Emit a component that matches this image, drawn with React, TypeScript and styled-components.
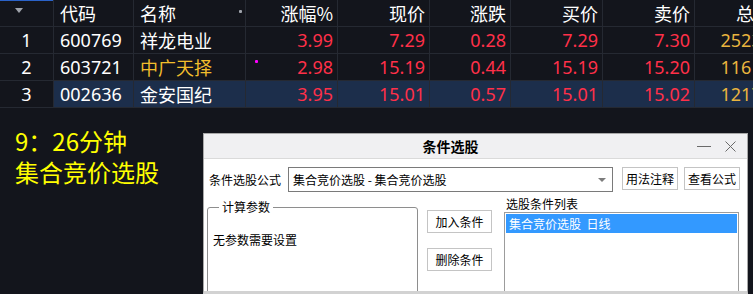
import React from "react";
import styled, { createGlobalStyle } from "styled-components";

const GlobalStyle = createGlobalStyle`
  html, body {
    margin: 0;
    padding: 0;
    background: #13151c;
  }
  * {
    box-sizing: border-box;
  }
`;

const Page = styled.div`
  width: 753px;
  height: 294px;
  overflow: hidden;
  background: #13151c;
  font-family: "Noto Sans CJK SC", sans-serif;
`;

const Grid = styled.div`
  display: grid;
  grid-template-columns: 54px 80px 112px 92px 92px 81px 92px 92px 82px;
  grid-auto-rows: 27px;
  width: 777px;
`;

const Cell = styled.div<{ $align?: "left" | "right" | "center"; $sel?: boolean; $color?: string }>`
  display: flex;
  align-items: center;
  justify-content: ${(p) =>
    p.$align === "right" ? "flex-end" : p.$align === "center" ? "center" : "flex-start"};
  padding: 0 ${(p) => (p.$align === "right" ? "4px" : "0")} 0
    ${(p) => (p.$align === "left" ? "6px" : "0")};
  border-right: 1px solid #252932;
  border-bottom: 1px solid #252932;
  background: ${(p) => (p.$sel ? "#1c2e4b" : "transparent")};
  color: ${(p) => p.$color || "#ffffff"};
  font-family: "Noto Sans", "Noto Sans CJK SC", sans-serif;
  font-size: 18px;
  line-height: 26px;
  white-space: nowrap;
  position: relative;
`;

const HeadCell = styled(Cell)`
  font-family: "Noto Sans CJK SC", sans-serif;
`;

const SortCell = styled(HeadCell)`
  box-shadow: inset 0 1px 0 #2a62c8;
  align-items: flex-start;
  padding-left: 15px;
  padding-top: 8px;
`;

const SortArrow = styled.span`
  width: 0;
  height: 0;
  border-left: 4px solid transparent;
  border-right: 4px solid transparent;
  border-top: 5px solid #9ea2aa;
`;

const Dot = styled.span<{ $color: string; $x: number; $y: number }>`
  position: absolute;
  left: ${(p) => p.$x}px;
  top: ${(p) => p.$y}px;
  width: 3px;
  height: 3px;
  border-radius: 1px;
  background: ${(p) => p.$color};
`;

const Name = styled.span`
  font-family: "Noto Sans CJK SC", sans-serif;
`;

const Lower = styled.div`
  display: flex;
  align-items: flex-start;
`;

const Caption = styled.div`
  flex: 0 0 203px;
  padding: 17px 0 0 15px;
  color: #ffff00;
  font-family: "Noto Sans CJK SC", sans-serif;
  font-size: 24px;
  line-height: 31px;
`;

const CaptionLine = styled.div`
  height: 31px;
  white-space: nowrap;
`;

const Dialog = styled.div`
  margin-top: 25px;
  width: 545px;
  height: 161px;
  background: #ffffff;
  border: 1px solid #a8a8a8;
  border-bottom: 3px solid #d2d2d2;
  overflow: hidden;
  font-family: "Noto Sans CJK SC", sans-serif;
  font-size: 12px;
  color: #000;
`;

const TitleBar = styled.div`
  display: flex;
  align-items: center;
  height: 25px;
  background: #f0f0f2;
  border-bottom: 1px solid #dadada;
`;

const Title = styled.div`
  flex: 1;
  text-align: center;
  font-size: 14px;
  font-weight: bold;
`;

const Controls = styled.div`
  flex: 0 0 50px;
  display: flex;
  align-items: center;
  gap: 14px;
`;

const MinLine = styled.span`
  width: 14px;
  height: 1px;
  background: #6a6a6a;
`;

const Row = styled.div<{ $pl: number; $mt: number }>`
  display: flex;
  align-items: flex-start;
  padding-left: ${(p) => p.$pl}px;
  margin-top: ${(p) => p.$mt}px;
`;

const Label = styled.span`
  line-height: 25px;
  white-space: pre;
`;

const Combo = styled.div`
  margin-left: 7px;
  width: 325px;
  height: 25px;
  border: 1px solid #7a7a7a;
  display: flex;
  align-items: center;
  justify-content: space-between;
  padding: 0 6px 0 4px;
  white-space: pre;
`;

const ComboArrow = styled.span`
  width: 0;
  height: 0;
  border-left: 4px solid transparent;
  border-right: 4px solid transparent;
  border-top: 4px solid #7c7c7c;
`;

const Btn = styled.div<{ $w: number; $ml?: number; $mt?: number }>`
  width: ${(p) => p.$w}px;
  height: 23px;
  margin-left: ${(p) => p.$ml || 0}px;
  margin-top: ${(p) => p.$mt || 0}px;
  border: 1px solid #c4c4c4;
  background: #ffffff;
  display: flex;
  align-items: center;
  justify-content: center;
  line-height: 1;
`;

const Group = styled.fieldset`
  margin: 4px 0 0 0;
  width: 211px;
  height: 120px;
  border: 1px solid #8e8e8e;
  border-radius: 3px;
  padding: 17px 5px 0;
`;

const Legend = styled.legend`
  margin-left: 6px;
  padding: 0 3px;
  line-height: 14px;
`;

const BtnCol = styled.div`
  margin-left: 9px;
  display: flex;
  flex-direction: column;
  padding-top: 14px;
`;

const ListSection = styled.div`
  margin-left: 12px;
  width: 235px;
`;

const ListLabel = styled.div`
  line-height: 16px;
  padding-left: 2px;
`;

const ListBox = styled.div`
  height: 100px;
  border: 1px solid #9c9c9c;
  padding: 1px;
`;

const ListItem = styled.div<{ $sel?: boolean }>`
  height: 19px;
  line-height: 19px;
  padding-left: 3px;
  white-space: pre;
  background: ${(p) => (p.$sel ? "#3399ff" : "transparent")};
  color: ${(p) => (p.$sel ? "#ffffff" : "#000")};
`;

const RED = "#ff3049";
const GOLD = "#e9b43f";

type Stock = {
  code: string;
  name: string;
  nameColor?: string;
  pct: string;
  price: string;
  chg: string;
  bid: string;
  ask: string;
  vol: string;
  sel?: boolean;
};

const rows: Stock[] = [
  { code: "600769", name: "祥龙电业", pct: "3.99", price: "7.29", chg: "0.28", bid: "7.29", ask: "7.30", vol: "25233" },
  { code: "603721", name: "中广天择", nameColor: "#f2be2c", pct: "2.98", price: "15.19", chg: "0.44", bid: "15.19", ask: "15.20", vol: "11617" },
  { code: "002636", name: "金安国纪", pct: "3.95", price: "15.01", chg: "0.57", bid: "15.01", ask: "15.02", vol: "12177", sel: true },
];

const headers = ["涨幅%", "现价", "涨跌", "买价", "卖价", "总手"];

export default function App() {
  return (
    <Page>
      <GlobalStyle />
      <Grid>
        <SortCell $align="left">
          <SortArrow />
        </SortCell>
        <HeadCell $align="left">代码</HeadCell>
        <HeadCell $align="left">
          名称
          <Dot $color="#a0a4ac" $x={105} $y={10} />
        </HeadCell>
        {headers.map((h) => (
          <HeadCell key={h} $align="right">
            {h}
          </HeadCell>
        ))}
        {rows.map((r, i) => (
          <React.Fragment key={r.code}>
            <Cell $align="center">{i + 1}</Cell>
            <Cell $align="left" $sel={r.sel}>{r.code}</Cell>
            <Cell $align="left" $sel={r.sel} $color={r.nameColor}>
              <Name>{r.name}</Name>
            </Cell>
            <Cell $align="right" $sel={r.sel} $color={RED}>
              {i === 1 && <Dot $color="#ff00ff" $x={9} $y={6} />}
              {r.pct}
            </Cell>
            <Cell $align="right" $sel={r.sel} $color={RED}>{r.price}</Cell>
            <Cell $align="right" $sel={r.sel} $color={RED}>{r.chg}</Cell>
            <Cell $align="right" $sel={r.sel} $color={RED}>{r.bid}</Cell>
            <Cell $align="right" $sel={r.sel} $color={RED}>{r.ask}</Cell>
            <Cell $align="right" $sel={r.sel} $color={GOLD}>{r.vol}</Cell>
          </React.Fragment>
        ))}
      </Grid>
      <Lower>
        <Caption>
          <CaptionLine>9：26分钟</CaptionLine>
          <CaptionLine>集合竞价选股</CaptionLine>
        </Caption>
        <Dialog>
          <TitleBar>
            <Title>条件选股</Title>
            <Controls>
              <MinLine />
              <svg width="11" height="11" viewBox="0 0 11 11">
                <path d="M0.5 0.5 L10.5 10.5 M10.5 0.5 L0.5 10.5" stroke="#6a6a6a" strokeWidth="1" />
              </svg>
            </Controls>
          </TitleBar>
          <Row $pl={5} $mt={8}>
            <Label>条件选股公式</Label>
            <Combo>
              <span>集合竞价选股 - 集合竞价选股</span>
              <ComboArrow />
            </Combo>
            <Btn $w={56} $ml={9}>用法注释</Btn>
            <Btn $w={56} $ml={6}>查看公式</Btn>
          </Row>
          <Row $pl={3} $mt={4}>
            <Group>
              <Legend>计算参数</Legend>
              无参数需要设置
            </Group>
            <BtnCol>
              <Btn $w={65}>加入条件</Btn>
              <Btn $w={65} $mt={15}>删除条件</Btn>
            </BtnCol>
            <ListSection>
              <ListLabel>选股条件列表</ListLabel>
              <ListBox>
                <ListItem $sel>集合竞价选股  日线</ListItem>
              </ListBox>
            </ListSection>
          </Row>
        </Dialog>
      </Lower>
    </Page>
  );
}
